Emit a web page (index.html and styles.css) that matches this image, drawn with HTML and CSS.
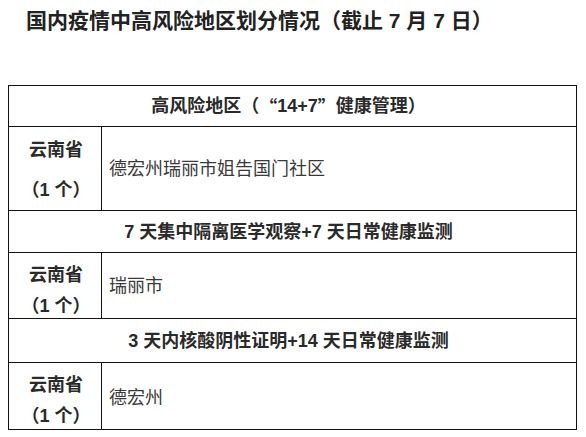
FILE: index.html
```html
<!DOCTYPE html>
<html lang="zh-CN">
<head>
<meta charset="utf-8">
<link rel="stylesheet" href="styles.css">
</head>
<body>
<h1 class="title">国内疫情中高风险地区划分情况（截止 7 月 7 日）</h1>
<div class="sheet">
  <div class="head">高风险地区（<span class="cjk">“</span>14+7<span class="cjk">”</span>健康管理）</div>
  <div class="row r1">
    <div class="prov"><div class="pl">云南省</div><div class="pl">（1 个）</div></div>
    <div class="place">德宏州瑞丽市姐告国门社区</div>
  </div>
  <div class="head">7 天集中隔离医学观察+7 天日常健康监测</div>
  <div class="row r2">
    <div class="prov"><div class="pl">云南省</div><div class="pl">（1 个）</div></div>
    <div class="place">瑞丽市</div>
  </div>
  <div class="head">3 天内核酸阴性证明+14 天日常健康监测</div>
  <div class="row r3 last">
    <div class="prov"><div class="pl">云南省</div><div class="pl">（1 个）</div></div>
    <div class="place">德宏州</div>
  </div>
</div>
</body>
</html>
```
FILE: styles.css
```css
* { box-sizing: border-box; }
html, body { margin: 0; padding: 0; background: #fff; }
body {
  font-family: "Liberation Sans", "Noto Sans CJK SC", sans-serif;
  color: #333;
}
.title {
  margin: 0;
  padding-left: 26px;
  font-size: 21px;
  line-height: 42px;
  font-weight: bold;
  color: #222;
  height: 85px;
  overflow: hidden;
}
.cjk { font-family: "Noto Sans CJK SC", sans-serif; }
.sheet {
  margin-left: 8px;
  width: 569px;
  height: 345px;
  border: 1px solid #111;
  display: grid;
  grid-template-rows: 41px 84px 42px 66px 44px 66px;
  overflow: hidden;
}
.head {
  display: flex;
  align-items: center;
  justify-content: center;
  font-size: 18px;
  line-height: 24px;
  font-weight: bold;
  color: #2a2a2a;
  border-bottom: 1px solid #111;
  padding-right: 8px;
  overflow: hidden;
}
.row {
  display: grid;
  grid-template-columns: 93px 1fr;
  grid-template-rows: 100%;
  border-bottom: 1px solid #111;
  overflow: hidden;
}
.row.last { border-bottom: none; }
.prov {
  border-right: 1px solid #111;
  display: flex;
  flex-direction: column;
  align-items: center;
  justify-content: center;
  font-size: 18px;
  font-weight: bold;
  color: #2a2a2a;
  overflow: hidden;
}
.r1 .prov { padding-top: 2px; }
.r1 .pl { line-height: 40px; }
.r2 .prov, .r3 .prov { padding-top: 10px; }
.r2 .pl, .r3 .pl { line-height: 31px; }
.pl { padding-left: 2px; }
.place {
  display: flex;
  align-items: center;
  padding-left: 7px;
  font-size: 18px;
  line-height: 24px;
  color: #3a3a3a;
}
.r3 .place { padding-top: 4px; }
```
